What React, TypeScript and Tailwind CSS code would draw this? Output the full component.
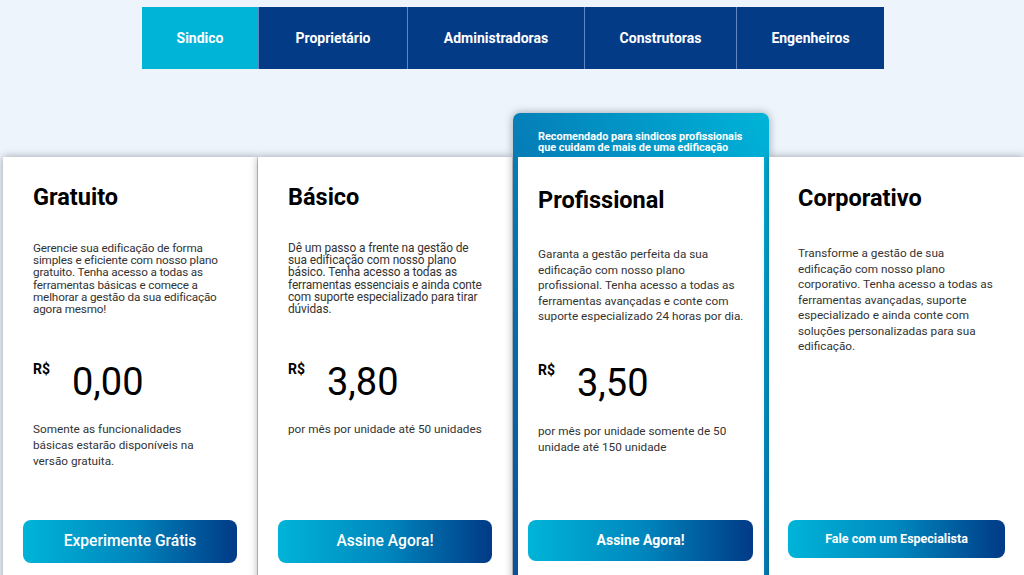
import React from "react";

const tabs = [
  { label: "Sindico", w: "w-[116px]", active: true },
  { label: "Proprietário", w: "w-[149px]" },
  { label: "Administradoras", w: "w-[177px]" },
  { label: "Construtoras", w: "w-[152px]" },
  { label: "Engenheiros", w: "w-[148px]" },
];

const Price = ({ value }: { value: string }) => (
  <div className="flex h-[44px] items-start">
    <span className="mt-[1px] w-[39px] text-[14px] font-bold leading-[16px] text-black">R$</span>
    <span className="text-[38px] leading-[44px] text-black">{value}</span>
  </div>
);

const GradientButton = ({ label, className }: { label: string; className: string }) => (
  <button
    className={`flex items-center justify-center rounded-lg bg-gradient-to-r from-[#00b4d8] via-[#0088be] to-[#023a86] text-white ${className}`}
  >
    {label}
  </button>
);

export default function App() {
  return (
    <div className="h-[575px] w-full overflow-hidden bg-[#edf4fc] font-['Roboto',sans-serif]">
      {/* Tabs */}
      <div className="flex justify-center pt-[7px] pl-[2px]">
        {tabs.map((t) => (
          <div
            key={t.label}
            className={`flex h-[62px] items-center justify-center text-[14px] font-bold text-white ${t.w} ${
              t.active ? "bg-[#00b4d8]" : "border-l border-[#5f86bf] bg-[#033b87]"
            }`}
          >
            {t.label}
          </div>
        ))}
      </div>

      {/* Plans */}
      <div className="mt-[44px] flex items-start pl-[3px]">
        {/* Gratuito */}
        <div className="relative mt-[44px] flex h-[430px] w-[254px] flex-col bg-white pb-[24px] shadow-[0_0_8px_rgba(0,0,0,0.35)]">
          <div className="pl-[30px] pr-[22px] pt-[27px]">
            <h2 className="text-[23.5px] font-bold leading-[26px] text-black">Gratuito</h2>
            <p className="mt-[32px] h-[118px] pr-[6px] text-[11.7px] leading-[12.2px] tracking-[-0.15px] text-[#333]">
              Gerencie sua edificação de forma simples e eficiente com nosso plano gratuito. Tenha acesso a
              todas as ferramentas básicas e comece a melhorar a gestão da sua edificação agora mesmo!
            </p>
            <Price value="0,00" />
            <p className="mt-[17px] pr-[30px] text-[11.75px] leading-[16px] text-[#333]">
              Somente as funcionalidades básicas estarão disponíveis na versão gratuita.
            </p>
          </div>
          <GradientButton
            label="Experimente Grátis"
            className="mx-[20px] mt-auto h-[43px] text-[15.6px] font-medium"
          />
        </div>

        {/* Básico */}
        <div className="relative ml-px mt-[44px] flex h-[430px] w-[254px] flex-col bg-white pb-[24px] shadow-[0_0_8px_rgba(0,0,0,0.35)]">
          <div className="pl-[30px] pr-[22px] pt-[27px]">
            <h2 className="text-[23.5px] font-bold leading-[26px] text-black">Básico</h2>
            <p className="mt-[32px] h-[118px] whitespace-nowrap text-[11.9px] leading-[12.2px] tracking-[-0.1px] text-[#333]">
              Dê um passo a frente na gestão de
              <br />
              sua edificação com nosso plano
              <br />
              básico. Tenha acesso a todas as
              <br />
              ferramentas essenciais e ainda conte
              <br />
              com suporte especializado para tirar
              <br />
              dúvidas.
            </p>
            <Price value="3,80" />
            <p className="mt-[17px] text-[11.75px] leading-[16px] text-[#333]">
              por mês por unidade até 50 unidades
            </p>
          </div>
          <GradientButton
            label="Assine Agora!"
            className="mx-[20px] mt-auto h-[43px] text-[15.6px] font-medium"
          />
        </div>

        {/* Profissional */}
        <div className="relative ml-px flex h-[474px] w-[256px] flex-col rounded-t-[7px] bg-gradient-to-tr from-[#0a4f9a] via-[#0580b8] to-[#00b4d8] px-[5px] shadow-[0_0_8px_rgba(0,0,0,0.35)]">
          <div className="h-[44px] pl-[20px] pt-[18px] text-[10.9px] font-bold leading-[11px] text-white">
            Recomendado para sindicos profissionais
            <br />
            que cuidam de mais de uma edificação
          </div>
          <div className="flex flex-1 flex-col bg-white pb-[26px]">
            <div className="pl-[20px] pr-[12px] pt-[30px]">
              <h2 className="text-[23.5px] font-bold leading-[26px] text-black">Profissional</h2>
              <p className="mt-[34px] h-[114px] text-[11.75px] leading-[15.5px] text-[#333]">
                Garanta a gestão perfeita da sua edificação com nosso plano profissional. Tenha acesso a
                todas as ferramentas avançadas e conte com suporte especializado 24 horas por dia.
              </p>
              <Price value="3,50" />
              <p className="mt-[18px] pr-[8px] text-[11.75px] leading-[16px] text-[#333]">
                por mês por unidade somente de 50 unidade até 150 unidade
              </p>
            </div>
            <GradientButton
              label="Assine Agora!"
              className="ml-[10px] mr-[11px] mt-auto h-[41px] text-[14px] font-bold"
            />
          </div>
        </div>

        {/* Corporativo */}
        <div className="relative mt-[44px] flex h-[430px] w-[255px] flex-col bg-white pb-[29px] shadow-[0_0_8px_rgba(0,0,0,0.35)]">
          <div className="pl-[29px] pr-[24px] pt-[28px]">
            <h2 className="text-[23.5px] font-bold leading-[26px] text-black">Corporativo</h2>
            <p className="mt-[35px] text-[11.75px] leading-[15.5px] text-[#333]">
              Transforme a gestão de sua edificação com nosso plano corporativo. Tenha acesso a todas as
              ferramentas avançadas, suporte especializado e ainda conte com soluções personalizadas para
              sua edificação.
            </p>
          </div>
          <GradientButton
            label="Fale com um Especialista"
            className="mx-[19px] mt-auto h-[38px] text-[12.5px] font-bold"
          />
        </div>
      </div>
    </div>
  );
}
